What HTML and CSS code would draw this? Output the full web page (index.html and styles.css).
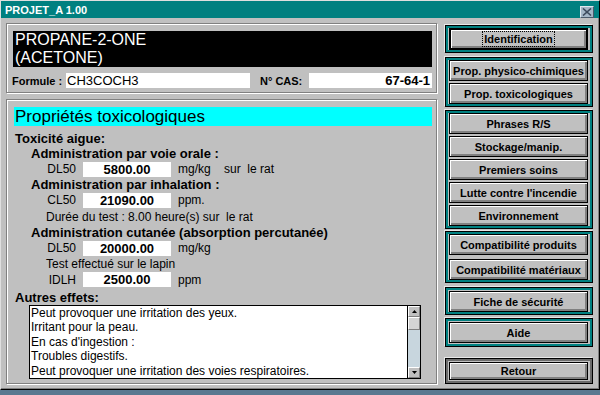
FILE: index.html
```html
<!DOCTYPE html>
<html lang="fr">
<head>
    <meta charset="UTF-8">
    <title>PROJET_A 1.00</title>
    <link rel="stylesheet" href="styles.css">
</head>
<body>
    <div class="window">
        <div class="titlebar">
            <span class="title">PROJET_A 1.00</span>
            <span class="close">
                <svg width="10" height="8" viewBox="0 0 10 8"><path d="M1 0.5 L9 7.5 M9 0.5 L1 7.5" stroke="#3c4a5c" stroke-width="1.6" fill="none"/></svg>
            </span>
        </div>

        <div class="client">
            <div class="main">
                <div class="panel head">
                    <div class="name">PROPANE-2-ONE<br>(ACETONE)</div>
                    <div class="ids">
                        <span class="lbl">Formule :</span>
                        <div class="field formula">CH3COCH3</div>
                        <span class="lbl cas-lbl">N° CAS:</span>
                        <div class="field cas">67-64-1</div>
                    </div>
                </div>

                <div class="panel tox">
                    <div class="section-title">Propriétés toxicologiques</div>

                    <div class="row h15 lvl1 bold">Toxicité aigue:</div>
                    <div class="row h15 lvl2 bold">Administration par voie orale :</div>
                    <div class="row h16 value-row">
                        <span class="key">DL50</span>
                        <span class="value">5800.00</span>
                        <span class="unit">mg/kg</span>
                        <span class="note">sur&nbsp; le rat</span>
                    </div>
                    <div class="row h15 lvl2 bold">Administration par inhalation :</div>
                    <div class="row h16 value-row">
                        <span class="key">CL50</span>
                        <span class="value">21090.00</span>
                        <span class="unit">ppm.</span>
                    </div>
                    <div class="row h17 lvl3">Durée du test : 8.00 heure(s) sur&nbsp; le rat</div>
                    <div class="row h15 lvl2 bold">Administration cutanée (absorption percutanée)</div>
                    <div class="row h16 value-row">
                        <span class="key">DL50</span>
                        <span class="value">20000.00</span>
                        <span class="unit">mg/kg</span>
                    </div>
                    <div class="row h16 lvl3">Test effectué sur le lapin</div>
                    <div class="row h15 value-row">
                        <span class="key">IDLH</span>
                        <span class="value">2500.00</span>
                        <span class="unit">ppm</span>
                    </div>
                    <div class="row h15 lvl1 bold others">Autres effets:</div>

                    <div class="memo">
                        <div class="memo-text">
                            Peut provoquer une irritation des yeux.<br>
                            Irritant pour la peau.<br>
                            En cas d'ingestion :<br>
                            Troubles digestifs.<br>
                            Peut provoquer une irritation des voies respiratoires.
                        </div>
                        <div class="scrollbar">
                            <div class="sb-btn">
                                <svg width="5" height="3" viewBox="0 0 5 3"><path d="M2.5 0 L5 3 L0 3 Z" fill="#000"/></svg>
                            </div>
                            <div class="sb-thumb"></div>
                            <div class="sb-track"></div>
                            <div class="sb-btn">
                                <svg width="5" height="3" viewBox="0 0 5 3"><path d="M0 0 L5 0 L2.5 3 Z" fill="#000"/></svg>
                            </div>
                        </div>
                    </div>
                </div>
            </div>

            <div class="side">
                <div class="group g1">
                    <button class="btn default"><span class="focus">Identification</span></button>
                </div>
                <div class="group g2">
                    <button class="btn">Prop. physico-chimiques</button>
                    <button class="btn">Prop. toxicologiques</button>
                </div>
                <div class="group g3">
                    <button class="btn">Phrases R/S</button>
                    <button class="btn">Stockage/manip.</button>
                    <button class="btn">Premiers soins</button>
                    <button class="btn">Lutte contre l'incendie</button>
                    <button class="btn">Environnement</button>
                </div>
                <div class="group g4">
                    <button class="btn">Compatibilité produits</button>
                    <button class="btn">Compatibilité matériaux</button>
                </div>
                <div class="group g5">
                    <button class="btn">Fiche de sécurité</button>
                </div>
                <div class="group g6">
                    <button class="btn">Aide</button>
                </div>
                <div class="group g7 plain">
                    <button class="btn">Retour</button>
                </div>
            </div>
        </div>
    </div>
</body>
</html>
```

FILE: styles.css
```css
body {
    margin: 0;
    background: #5a7890;
    font-family: Arial, "Liberation Sans", sans-serif;
    color: #000;
}
.window {
    width: 600px;
    height: 390px;
    box-sizing: border-box;
    background: #c0c0c0;
    border: 1px solid #000;
    border-top-color: #dfdfdf;
    border-left-color: #dfdfdf;
    box-shadow: inset -1px -1px 0 #808080;
}
.titlebar {
    height: 17px;
    background: #008080;
    display: flex;
    align-items: center;
    justify-content: space-between;
    padding: 0 5px 0 4px;
}
.title {
    color: #fff;
    font-weight: bold;
    font-size: 11px;
}
.close {
    width: 14px;
    height: 12px;
    box-sizing: border-box;
    background: #a4b6c6;
    border: 1px solid #dfe8ef;
    border-right-color: #4a5a6a;
    border-bottom-color: #4a5a6a;
    display: flex;
    align-items: center;
    justify-content: center;
    margin-top: 4px;
}
.client {
    display: flex;
    align-items: flex-start;
    gap: 8px;
    padding: 5px 0 0 5px;
}
.main {
    width: 431px;
    display: flex;
    flex-direction: column;
    gap: 6px;
}
.panel {
    box-sizing: border-box;
    border: 1px solid #808080;
    box-shadow: inset 1px 1px 0 #fff, 1px 1px 0 #fff;
}
.head {
    height: 70px;
    padding: 7px 4px 0 6px;
}
.name {
    background: #000;
    color: #fff;
    height: 36px;
    font-size: 16px;
    line-height: 18px;
    padding-left: 2px;
}
.ids {
    display: flex;
    align-items: center;
    margin-top: 6px;
    height: 15px;
}
.lbl {
    flex-shrink: 0;
    white-space: nowrap;
    font-weight: bold;
    font-size: 11px;
    width: 54px;
    margin-left: -1px;
}
.field {
    flex-shrink: 0;
    background: #fff;
    height: 15px;
    line-height: 15px;
    box-sizing: border-box;
    white-space: nowrap;
}
.formula {
    width: 184px;
    padding-left: 1px;
    font-size: 13px;
}
.cas-lbl {
    margin-left: 10px;
    width: 49px;
}
.cas {
    width: 123px;
    text-align: right;
    padding-right: 2px;
    font-weight: bold;
    font-size: 13px;
}
.tox {
    height: 285px;
    padding: 7px 4px 0 7px;
}
.section-title {
    background: #00ffff;
    height: 19px;
    line-height: 19px;
    font-size: 17px;
    padding-left: 1px;
    margin-bottom: 5px;
}
.row {
    display: flex;
    align-items: center;
    font-size: 12px;
    white-space: nowrap;
}
.h15 { height: 15px; }
.h16 { height: 16px; }
.h17 { height: 17px; }
.bold {
    font-weight: bold;
    font-size: 13px;
}
.lvl1 { padding-left: 1px; }
.lvl2 { padding-left: 17px; }
.lvl3 { padding-left: 32px; }
.others { margin-top: 3px; }
.key {
    width: 63px;
    box-sizing: border-box;
    text-align: right;
    padding-right: 1px;
}
.value {
    background: #fff;
    width: 88px;
    height: 15px;
    line-height: 15px;
    margin-left: 6px;
    text-align: center;
    font-weight: bold;
    font-size: 13px;
}
.unit {
    width: 46px;
    margin-left: 7px;
}
.note {
    font-size: 12px;
}
.memo {
    display: flex;
    margin-left: 15px;
    width: 392px;
    height: 74px;
    box-sizing: border-box;
    border: 1px solid #000;
    background: #fff;
}
.memo-text {
    flex: 1;
    font-size: 12px;
    line-height: 14.4px;
    padding: 0 0 0 1px;
    white-space: nowrap;
    overflow: hidden;
}
.scrollbar {
    width: 12px;
    display: flex;
    flex-direction: column;
    border-left: 1px solid #000;
}
.sb-btn, .sb-thumb {
    height: 11px;
    box-sizing: border-box;
    background: #c0c0c0;
    border: 1px solid #fff;
    border-right-color: #808080;
    border-bottom-color: #808080;
    display: flex;
    align-items: center;
    justify-content: center;
}
.sb-thumb {
    height: 13px;
    background: #d4d4d4;
}
.sb-track {
    flex: 1;
    background: #c8d6de;
}
.side {
    margin-top: 2px;
    width: 148px;
    display: flex;
    flex-direction: column;
}
.group {
    box-sizing: border-box;
    border: 1px solid #000;
    box-shadow: inset 0 0 0 2px #008080, -1px -1px 0 #e8e8e8;
    padding: 2px 4px 2px 3px;
    display: flex;
    flex-direction: column;
    gap: 2px;
}
.plain {
    box-shadow: inset 0 0 0 2px #6c6c6c, -1px -1px 0 #e8e8e8;
}
.g2 { margin-top: 4px; }
.g3 { margin-top: 3px; }
.g4 { margin-top: 2px; gap: 4px; }
.g5 { margin-top: 4px; padding-top: 3px; }
.g6 { margin-top: 3px; padding-top: 3px; padding-bottom: 3px; }
.g7 { margin-top: 11px; padding-top: 3px; padding-bottom: 3px; }
.btn {
    flex-shrink: 0;
    height: 21px;
    width: 139px;
    margin: 0;
    padding: 0;
    background: #c0c0c0;
    border: 1px solid #000;
    box-shadow: inset 1px 1px 0 #fff, inset -2px -2px 0 #808080;
    font-family: Arial, "Liberation Sans", sans-serif;
    font-weight: bold;
    font-size: 11px;
    color: #000;
}
.default {
    height: 22px;
    border-width: 2px;
}
.focus {
    border: 1px dotted #000;
    padding: 1px 1px;
}
.g7 .btn { height: 18px; }
```
